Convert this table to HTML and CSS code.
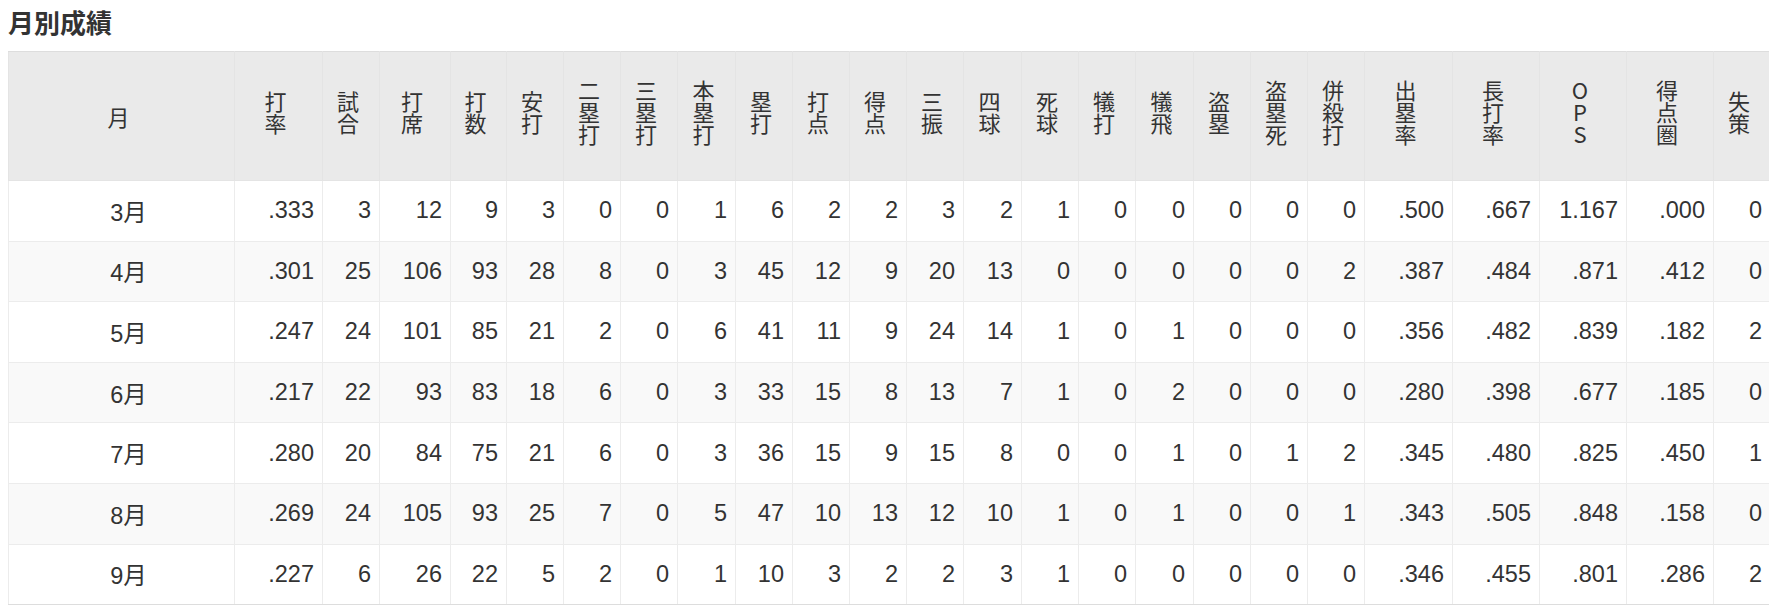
FILE: index.html
```html
<!DOCTYPE html>
<html lang="ja">
<head>
<meta charset="utf-8">
<title>月別成績</title>
<link rel="stylesheet" href="styles.css">
</head>
<body>
<h2 class="title">月別成績</h2>
<table class="stats">
  <colgroup>
    <col class="col-month">
    <col class="col-w88">
    <col class="col-w57">
    <col class="col-w71">
    <col class="col-w56">
    <col class="col-w57">
    <col class="col-w57">
    <col class="col-w57">
    <col class="col-w58">
    <col class="col-w57">
    <col class="col-w57">
    <col class="col-w57">
    <col class="col-w57">
    <col class="col-w58">
    <col class="col-w57">
    <col class="col-w57">
    <col class="col-w58">
    <col class="col-w57">
    <col class="col-w57">
    <col class="col-w57">
    <col class="col-w88">
    <col class="col-w87">
    <col class="col-w87">
    <col class="col-w87">
    <col class="col-w57">
  </colgroup>
  <thead>
    <tr>
      <th class="h-month">月</th>
      <th><span class="vt">打率</span></th>
      <th><span class="vt">試合</span></th>
      <th><span class="vt">打席</span></th>
      <th><span class="vt">打数</span></th>
      <th><span class="vt">安打</span></th>
      <th><span class="vt">二塁打</span></th>
      <th><span class="vt">三塁打</span></th>
      <th><span class="vt">本塁打</span></th>
      <th><span class="vt">塁打</span></th>
      <th><span class="vt">打点</span></th>
      <th><span class="vt">得点</span></th>
      <th><span class="vt">三振</span></th>
      <th><span class="vt">四球</span></th>
      <th><span class="vt">死球</span></th>
      <th><span class="vt">犠打</span></th>
      <th><span class="vt">犠飛</span></th>
      <th><span class="vt">盗塁</span></th>
      <th><span class="vt">盗塁死</span></th>
      <th><span class="vt">併殺打</span></th>
      <th><span class="vt">出塁率</span></th>
      <th><span class="vt">長打率</span></th>
      <th><span class="vt">OPS</span></th>
      <th><span class="vt">得点圏</span></th>
      <th><span class="vt">失策</span></th>
    </tr>
  </thead>
  <tbody>
    <tr>
      <td class="month">3月</td><td>.333</td><td>3</td><td>12</td><td>9</td><td>3</td><td>0</td><td>0</td><td>1</td><td>6</td><td>2</td><td>2</td><td>3</td><td>2</td><td>1</td><td>0</td><td>0</td><td>0</td><td>0</td><td>0</td><td>.500</td><td>.667</td><td>1.167</td><td>.000</td><td>0</td>
    </tr>
    <tr>
      <td class="month">4月</td><td>.301</td><td>25</td><td>106</td><td>93</td><td>28</td><td>8</td><td>0</td><td>3</td><td>45</td><td>12</td><td>9</td><td>20</td><td>13</td><td>0</td><td>0</td><td>0</td><td>0</td><td>0</td><td>2</td><td>.387</td><td>.484</td><td>.871</td><td>.412</td><td>0</td>
    </tr>
    <tr>
      <td class="month">5月</td><td>.247</td><td>24</td><td>101</td><td>85</td><td>21</td><td>2</td><td>0</td><td>6</td><td>41</td><td>11</td><td>9</td><td>24</td><td>14</td><td>1</td><td>0</td><td>1</td><td>0</td><td>0</td><td>0</td><td>.356</td><td>.482</td><td>.839</td><td>.182</td><td>2</td>
    </tr>
    <tr>
      <td class="month">6月</td><td>.217</td><td>22</td><td>93</td><td>83</td><td>18</td><td>6</td><td>0</td><td>3</td><td>33</td><td>15</td><td>8</td><td>13</td><td>7</td><td>1</td><td>0</td><td>2</td><td>0</td><td>0</td><td>0</td><td>.280</td><td>.398</td><td>.677</td><td>.185</td><td>0</td>
    </tr>
    <tr>
      <td class="month">7月</td><td>.280</td><td>20</td><td>84</td><td>75</td><td>21</td><td>6</td><td>0</td><td>3</td><td>36</td><td>15</td><td>9</td><td>15</td><td>8</td><td>0</td><td>0</td><td>1</td><td>0</td><td>1</td><td>2</td><td>.345</td><td>.480</td><td>.825</td><td>.450</td><td>1</td>
    </tr>
    <tr>
      <td class="month">8月</td><td>.269</td><td>24</td><td>105</td><td>93</td><td>25</td><td>7</td><td>0</td><td>5</td><td>47</td><td>10</td><td>13</td><td>12</td><td>10</td><td>1</td><td>0</td><td>1</td><td>0</td><td>0</td><td>1</td><td>.343</td><td>.505</td><td>.848</td><td>.158</td><td>0</td>
    </tr>
    <tr>
      <td class="month">9月</td><td>.227</td><td>6</td><td>26</td><td>22</td><td>5</td><td>2</td><td>0</td><td>1</td><td>10</td><td>3</td><td>2</td><td>2</td><td>3</td><td>1</td><td>0</td><td>0</td><td>0</td><td>0</td><td>0</td><td>.346</td><td>.455</td><td>.801</td><td>.286</td><td>2</td>
    </tr>
  </tbody>
</table>
</body>
</html>
```

FILE: styles.css
```css
html, body {
  margin: 0;
  padding: 0;
  background: #ffffff;
}

body {
  margin: 8px;
  color: #333333;
  font-family: "Liberation Sans", "Noto Sans CJK JP", sans-serif;
}

.title {
  margin: 0 0 11px 0;
  height: 32px;
  line-height: 32px;
  font-size: 26px;
  font-weight: bold;
  color: #333333;
  font-family: "Liberation Sans", "Noto Sans CJK JP", sans-serif;
}

.stats {
  width: 1761px;
  table-layout: fixed;
  border-collapse: collapse;
  border: 1px solid #dddddd;
}

.col-month { width: 226px; }
.col-w88 { width: 88px; }
.col-w87 { width: 87px; }
.col-w71 { width: 71px; }
.col-w58 { width: 58px; }
.col-w57 { width: 57px; }
.col-w56 { width: 56px; }

.stats th {
  height: 128px;
  padding: 0 9px 0 3px;
  background: #eaeaea;
  border: 1px solid #e4e4e4;
  border-top-color: #dddddd;
  text-align: center;
  vertical-align: middle;
  font-family: "Noto Sans CJK JP", sans-serif;
  font-weight: normal;
  font-size: 22px;
  color: #333333;
}

.vt {
  display: inline-block;
  writing-mode: vertical-rl;
  text-orientation: upright;
  line-height: 1;
}

.h-month {
  line-height: 1;
}

.stats td {
  height: 59.6px;
  padding: 0 8px 0 4px;
  border: 1px solid #ececec;
  text-align: right;
  vertical-align: middle;
  font-size: 23.5px;
  color: #333333;
  white-space: nowrap;
}

.stats tbody tr:nth-child(even) td {
  background: #f9f9f9;
}

.stats td.month {
  text-align: center;
  padding: 0 0 0 14px;
}

.stats tbody tr:last-child td {
  border-bottom-color: #dddddd;
}
```
